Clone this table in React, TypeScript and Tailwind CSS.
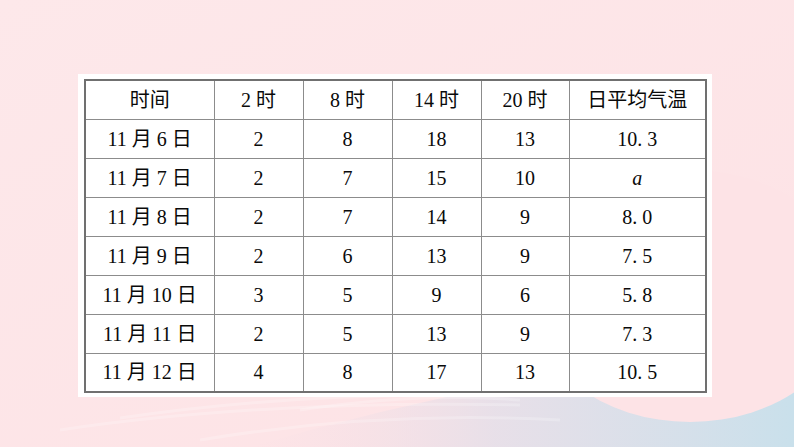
import React from "react";

const rows: [string, string, string, string, string, React.ReactNode][] = [
  ["11 月 6 日", "2", "8", "18", "13", "10. 3"],
  ["11 月 7 日", "2", "7", "15", "10", <span className="italic">a</span>],
  ["11 月 8 日", "2", "7", "14", "9", "8. 0"],
  ["11 月 9 日", "2", "6", "13", "9", "7. 5"],
  ["11 月 10 日", "3", "5", "9", "6", "5. 8"],
  ["11 月 11 日", "2", "5", "13", "9", "7. 3"],
  ["11 月 12 日", "4", "8", "17", "13", "10. 5"],
];

const widths = ["w-[129px]", "w-[89px]", "w-[89px]", "w-[89px]", "w-[88px]", "w-[137px]"];

function Background() {
  return (
    <svg className="absolute inset-0" width="794" height="447" viewBox="0 0 794 447">
      <defs>
        <linearGradient id="bg" x1="0" y1="0" x2="1" y2="1">
          <stop offset="0" stopColor="#fde8ea" />
          <stop offset="1" stopColor="#fde2e5" />
        </linearGradient>
        <linearGradient id="blue" x1="0" y1="0" x2="1" y2="0">
          <stop offset="0" stopColor="#f8dfe5" stopOpacity="0" />
          <stop offset="0.45" stopColor="#e4dfe9" stopOpacity="0.85" />
          <stop offset="1" stopColor="#c9e0eb" />
        </linearGradient>
      </defs>
      <rect width="794" height="447" fill="url(#bg)" />
      <path d="M 250 447 Q 520 368 794 345 L 794 447 Z" fill="url(#blue)" />
      <ellipse cx="690" cy="296" rx="162" ry="126" fill="#fde3e6" />
      <g fill="none" stroke="#ffffff" strokeOpacity="0.22" strokeWidth="3">
        <path d="M 60 430 Q 260 400 520 405" />
        <path d="M 120 418 Q 300 392 470 396" />
        <path d="M 200 440 Q 380 410 560 420" />
        <path d="M 300 410 Q 420 392 520 400" />
      </g>
    </svg>
  );
}

export default function App() {
  return (
    <div className="relative w-[794px] h-[447px] overflow-hidden bg-[#fde4e6]">
      <Background />
      <div className="relative pt-[74px] pl-[78px]">
        <div className="w-[634px] h-[323px] bg-white pt-[5px] pl-[6px]">
          <table className="border-collapse border-2 border-[#707070] text-[20px] text-[#0a0a0a] leading-none font-['Liberation_Serif','Noto_Sans_CJK_SC',serif]">
            <thead>
              <tr className="h-[39px]">
                {["时间", "2 时", "8 时", "14 时", "20 时", "日平均气温"].map((h, i) => (
                  <th
                    key={i}
                    className={`${widths[i]} border border-[#8c8c8c] font-normal text-center align-middle p-0`}
                  >
                    {h}
                  </th>
                ))}
              </tr>
            </thead>
            <tbody>
              {rows.map((r, ri) => (
                <tr key={ri} className="h-[39px]">
                  {r.map((c, ci) => (
                    <td
                      key={ci}
                      className={`${widths[ci]} border border-[#8c8c8c] text-center align-middle p-0`}
                    >
                      {c}
                    </td>
                  ))}
                </tr>
              ))}
            </tbody>
          </table>
        </div>
      </div>
    </div>
  );
}
